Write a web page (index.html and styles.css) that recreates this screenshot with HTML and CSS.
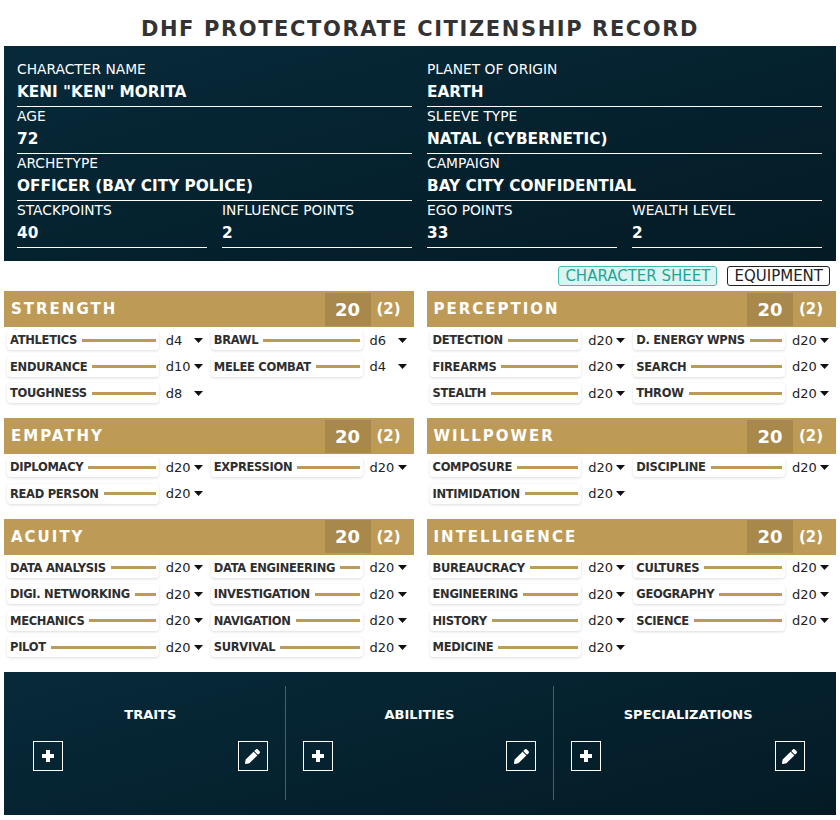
FILE: index.html
```html
<!DOCTYPE html>
<html lang="en">
<head>
<meta charset="utf-8">
<title>DHF Protectorate Citizenship Record</title>
<link rel="stylesheet" href="styles.css">
</head>
<body>
<div class="sheet">
  <h1 class="title">DHF PROTECTORATE CITIZENSHIP RECORD</h1>

  <section class="info">
    <div class="field wide"><div class="label">CHARACTER NAME</div><div class="value">KENI "KEN" MORITA</div></div>
    <div class="field wide"><div class="label">PLANET OF ORIGIN</div><div class="value">EARTH</div></div>
    <div class="field wide"><div class="label">AGE</div><div class="value">72</div></div>
    <div class="field wide"><div class="label">SLEEVE TYPE</div><div class="value">NATAL (CYBERNETIC)</div></div>
    <div class="field wide"><div class="label">ARCHETYPE</div><div class="value">OFFICER (BAY CITY POLICE)</div></div>
    <div class="field wide"><div class="label">CAMPAIGN</div><div class="value">BAY CITY CONFIDENTIAL</div></div>
    <div class="field"><div class="label">STACKPOINTS</div><div class="value">40</div></div>
    <div class="field"><div class="label">INFLUENCE POINTS</div><div class="value">2</div></div>
    <div class="field"><div class="label">EGO POINTS</div><div class="value">33</div></div>
    <div class="field"><div class="label">WEALTH LEVEL</div><div class="value">2</div></div>
  </section>

  <nav class="tabs">
    <span class="tab active">CHARACTER SHEET</span>
    <span class="tab">EQUIPMENT</span>
  </nav>

  <main class="attrs">
    <section class="attr">
      <header class="attr-head"><span class="attr-name">STRENGTH</span><span class="attr-score">20</span><span class="attr-mod">(2)</span></header>
      <div class="skills">
        <div class="skill"><div class="skill-card"><span class="skill-name">ATHLETICS</span><span class="skill-line"></span></div><div class="die"><span>d4</span><svg width="9" height="5" viewBox="0 0 9 5"><polygon points="0,0 9,0 4.5,5"/></svg></div></div>
        <div class="skill"><div class="skill-card"><span class="skill-name">BRAWL</span><span class="skill-line"></span></div><div class="die"><span>d6</span><svg width="9" height="5" viewBox="0 0 9 5"><polygon points="0,0 9,0 4.5,5"/></svg></div></div>
        <div class="skill"><div class="skill-card"><span class="skill-name">ENDURANCE</span><span class="skill-line"></span></div><div class="die"><span>d10</span><svg width="9" height="5" viewBox="0 0 9 5"><polygon points="0,0 9,0 4.5,5"/></svg></div></div>
        <div class="skill"><div class="skill-card"><span class="skill-name">MELEE COMBAT</span><span class="skill-line"></span></div><div class="die"><span>d4</span><svg width="9" height="5" viewBox="0 0 9 5"><polygon points="0,0 9,0 4.5,5"/></svg></div></div>
        <div class="skill"><div class="skill-card"><span class="skill-name">TOUGHNESS</span><span class="skill-line"></span></div><div class="die"><span>d8</span><svg width="9" height="5" viewBox="0 0 9 5"><polygon points="0,0 9,0 4.5,5"/></svg></div></div>
      </div>
    </section>

    <section class="attr">
      <header class="attr-head"><span class="attr-name">PERCEPTION</span><span class="attr-score">20</span><span class="attr-mod">(2)</span></header>
      <div class="skills">
        <div class="skill"><div class="skill-card"><span class="skill-name">DETECTION</span><span class="skill-line"></span></div><div class="die"><span>d20</span><svg width="9" height="5" viewBox="0 0 9 5"><polygon points="0,0 9,0 4.5,5"/></svg></div></div>
        <div class="skill"><div class="skill-card"><span class="skill-name">D. ENERGY WPNS</span><span class="skill-line"></span></div><div class="die"><span>d20</span><svg width="9" height="5" viewBox="0 0 9 5"><polygon points="0,0 9,0 4.5,5"/></svg></div></div>
        <div class="skill"><div class="skill-card"><span class="skill-name">FIREARMS</span><span class="skill-line"></span></div><div class="die"><span>d20</span><svg width="9" height="5" viewBox="0 0 9 5"><polygon points="0,0 9,0 4.5,5"/></svg></div></div>
        <div class="skill"><div class="skill-card"><span class="skill-name">SEARCH</span><span class="skill-line"></span></div><div class="die"><span>d20</span><svg width="9" height="5" viewBox="0 0 9 5"><polygon points="0,0 9,0 4.5,5"/></svg></div></div>
        <div class="skill"><div class="skill-card"><span class="skill-name">STEALTH</span><span class="skill-line"></span></div><div class="die"><span>d20</span><svg width="9" height="5" viewBox="0 0 9 5"><polygon points="0,0 9,0 4.5,5"/></svg></div></div>
        <div class="skill"><div class="skill-card"><span class="skill-name">THROW</span><span class="skill-line"></span></div><div class="die"><span>d20</span><svg width="9" height="5" viewBox="0 0 9 5"><polygon points="0,0 9,0 4.5,5"/></svg></div></div>
      </div>
    </section>

    <section class="attr">
      <header class="attr-head"><span class="attr-name">EMPATHY</span><span class="attr-score">20</span><span class="attr-mod">(2)</span></header>
      <div class="skills">
        <div class="skill"><div class="skill-card"><span class="skill-name">DIPLOMACY</span><span class="skill-line"></span></div><div class="die"><span>d20</span><svg width="9" height="5" viewBox="0 0 9 5"><polygon points="0,0 9,0 4.5,5"/></svg></div></div>
        <div class="skill"><div class="skill-card"><span class="skill-name">EXPRESSION</span><span class="skill-line"></span></div><div class="die"><span>d20</span><svg width="9" height="5" viewBox="0 0 9 5"><polygon points="0,0 9,0 4.5,5"/></svg></div></div>
        <div class="skill"><div class="skill-card"><span class="skill-name">READ PERSON</span><span class="skill-line"></span></div><div class="die"><span>d20</span><svg width="9" height="5" viewBox="0 0 9 5"><polygon points="0,0 9,0 4.5,5"/></svg></div></div>
      </div>
    </section>

    <section class="attr">
      <header class="attr-head"><span class="attr-name">WILLPOWER</span><span class="attr-score">20</span><span class="attr-mod">(2)</span></header>
      <div class="skills">
        <div class="skill"><div class="skill-card"><span class="skill-name">COMPOSURE</span><span class="skill-line"></span></div><div class="die"><span>d20</span><svg width="9" height="5" viewBox="0 0 9 5"><polygon points="0,0 9,0 4.5,5"/></svg></div></div>
        <div class="skill"><div class="skill-card"><span class="skill-name">DISCIPLINE</span><span class="skill-line"></span></div><div class="die"><span>d20</span><svg width="9" height="5" viewBox="0 0 9 5"><polygon points="0,0 9,0 4.5,5"/></svg></div></div>
        <div class="skill"><div class="skill-card"><span class="skill-name">INTIMIDATION</span><span class="skill-line"></span></div><div class="die"><span>d20</span><svg width="9" height="5" viewBox="0 0 9 5"><polygon points="0,0 9,0 4.5,5"/></svg></div></div>
      </div>
    </section>

    <section class="attr">
      <header class="attr-head"><span class="attr-name">ACUITY</span><span class="attr-score">20</span><span class="attr-mod">(2)</span></header>
      <div class="skills">
        <div class="skill"><div class="skill-card"><span class="skill-name">DATA ANALYSIS</span><span class="skill-line"></span></div><div class="die"><span>d20</span><svg width="9" height="5" viewBox="0 0 9 5"><polygon points="0,0 9,0 4.5,5"/></svg></div></div>
        <div class="skill"><div class="skill-card"><span class="skill-name">DATA ENGINEERING</span><span class="skill-line"></span></div><div class="die"><span>d20</span><svg width="9" height="5" viewBox="0 0 9 5"><polygon points="0,0 9,0 4.5,5"/></svg></div></div>
        <div class="skill"><div class="skill-card"><span class="skill-name">DIGI. NETWORKING</span><span class="skill-line"></span></div><div class="die"><span>d20</span><svg width="9" height="5" viewBox="0 0 9 5"><polygon points="0,0 9,0 4.5,5"/></svg></div></div>
        <div class="skill"><div class="skill-card"><span class="skill-name">INVESTIGATION</span><span class="skill-line"></span></div><div class="die"><span>d20</span><svg width="9" height="5" viewBox="0 0 9 5"><polygon points="0,0 9,0 4.5,5"/></svg></div></div>
        <div class="skill"><div class="skill-card"><span class="skill-name">MECHANICS</span><span class="skill-line"></span></div><div class="die"><span>d20</span><svg width="9" height="5" viewBox="0 0 9 5"><polygon points="0,0 9,0 4.5,5"/></svg></div></div>
        <div class="skill"><div class="skill-card"><span class="skill-name">NAVIGATION</span><span class="skill-line"></span></div><div class="die"><span>d20</span><svg width="9" height="5" viewBox="0 0 9 5"><polygon points="0,0 9,0 4.5,5"/></svg></div></div>
        <div class="skill"><div class="skill-card"><span class="skill-name">PILOT</span><span class="skill-line"></span></div><div class="die"><span>d20</span><svg width="9" height="5" viewBox="0 0 9 5"><polygon points="0,0 9,0 4.5,5"/></svg></div></div>
        <div class="skill"><div class="skill-card"><span class="skill-name">SURVIVAL</span><span class="skill-line"></span></div><div class="die"><span>d20</span><svg width="9" height="5" viewBox="0 0 9 5"><polygon points="0,0 9,0 4.5,5"/></svg></div></div>
      </div>
    </section>

    <section class="attr">
      <header class="attr-head"><span class="attr-name">INTELLIGENCE</span><span class="attr-score">20</span><span class="attr-mod">(2)</span></header>
      <div class="skills">
        <div class="skill"><div class="skill-card"><span class="skill-name">BUREAUCRACY</span><span class="skill-line"></span></div><div class="die"><span>d20</span><svg width="9" height="5" viewBox="0 0 9 5"><polygon points="0,0 9,0 4.5,5"/></svg></div></div>
        <div class="skill"><div class="skill-card"><span class="skill-name">CULTURES</span><span class="skill-line"></span></div><div class="die"><span>d20</span><svg width="9" height="5" viewBox="0 0 9 5"><polygon points="0,0 9,0 4.5,5"/></svg></div></div>
        <div class="skill"><div class="skill-card"><span class="skill-name">ENGINEERING</span><span class="skill-line"></span></div><div class="die"><span>d20</span><svg width="9" height="5" viewBox="0 0 9 5"><polygon points="0,0 9,0 4.5,5"/></svg></div></div>
        <div class="skill"><div class="skill-card"><span class="skill-name">GEOGRAPHY</span><span class="skill-line"></span></div><div class="die"><span>d20</span><svg width="9" height="5" viewBox="0 0 9 5"><polygon points="0,0 9,0 4.5,5"/></svg></div></div>
        <div class="skill"><div class="skill-card"><span class="skill-name">HISTORY</span><span class="skill-line"></span></div><div class="die"><span>d20</span><svg width="9" height="5" viewBox="0 0 9 5"><polygon points="0,0 9,0 4.5,5"/></svg></div></div>
        <div class="skill"><div class="skill-card"><span class="skill-name">SCIENCE</span><span class="skill-line"></span></div><div class="die"><span>d20</span><svg width="9" height="5" viewBox="0 0 9 5"><polygon points="0,0 9,0 4.5,5"/></svg></div></div>
        <div class="skill"><div class="skill-card"><span class="skill-name">MEDICINE</span><span class="skill-line"></span></div><div class="die"><span>d20</span><svg width="9" height="5" viewBox="0 0 9 5"><polygon points="0,0 9,0 4.5,5"/></svg></div></div>
      </div>
    </section>
  </main>

  <section class="extras">
    <div class="extra">
      <h2 class="extra-title">TRAITS</h2>
      <div class="extra-actions">
        <button class="icon-btn" type="button" aria-label="Add trait"><svg width="12" height="12" viewBox="0 0 12 12"><rect x="4" y="0" width="4" height="12"/><rect x="0" y="4" width="12" height="4"/></svg></button>
        <button class="icon-btn" type="button" aria-label="Edit traits"><svg width="15" height="15" viewBox="0 0 512 512"><path d="M497.9 142.1l-46.1 46.1c-4.7 4.7-12.3 4.7-17 0l-111-111c-4.7-4.7-4.7-12.3 0-17l46.1-46.1c18.7-18.7 49.1-18.7 67.9 0l60.1 60.1c18.8 18.7 18.8 49.1 0 67.9zM284.2 99.8L21.6 362.4.4 483.9c-2.9 16.4 11.4 30.6 27.8 27.8l121.5-21.3 262.6-262.6c4.7-4.7 4.7-12.3 0-17l-111-111c-4.8-4.7-12.4-4.7-17.1 0z"/></svg></button>
      </div>
    </div>
    <div class="extra">
      <h2 class="extra-title">ABILITIES</h2>
      <div class="extra-actions">
        <button class="icon-btn" type="button" aria-label="Add ability"><svg width="12" height="12" viewBox="0 0 12 12"><rect x="4" y="0" width="4" height="12"/><rect x="0" y="4" width="12" height="4"/></svg></button>
        <button class="icon-btn" type="button" aria-label="Edit abilities"><svg width="15" height="15" viewBox="0 0 512 512"><path d="M497.9 142.1l-46.1 46.1c-4.7 4.7-12.3 4.7-17 0l-111-111c-4.7-4.7-4.7-12.3 0-17l46.1-46.1c18.7-18.7 49.1-18.7 67.9 0l60.1 60.1c18.8 18.7 18.8 49.1 0 67.9zM284.2 99.8L21.6 362.4.4 483.9c-2.9 16.4 11.4 30.6 27.8 27.8l121.5-21.3 262.6-262.6c4.7-4.7 4.7-12.3 0-17l-111-111c-4.8-4.7-12.4-4.7-17.1 0z"/></svg></button>
      </div>
    </div>
    <div class="extra">
      <h2 class="extra-title">SPECIALIZATIONS</h2>
      <div class="extra-actions">
        <button class="icon-btn" type="button" aria-label="Add specialization"><svg width="12" height="12" viewBox="0 0 12 12"><rect x="4" y="0" width="4" height="12"/><rect x="0" y="4" width="12" height="4"/></svg></button>
        <button class="icon-btn" type="button" aria-label="Edit specializations"><svg width="15" height="15" viewBox="0 0 512 512"><path d="M497.9 142.1l-46.1 46.1c-4.7 4.7-12.3 4.7-17 0l-111-111c-4.7-4.7-4.7-12.3 0-17l46.1-46.1c18.7-18.7 49.1-18.7 67.9 0l60.1 60.1c18.8 18.7 18.8 49.1 0 67.9zM284.2 99.8L21.6 362.4.4 483.9c-2.9 16.4 11.4 30.6 27.8 27.8l121.5-21.3 262.6-262.6c4.7-4.7 4.7-12.3 0-17l-111-111c-4.8-4.7-12.4-4.7-17.1 0z"/></svg></button>
      </div>
    </div>
  </section>
</div>
</body>
</html>
```

FILE: styles.css
```css
* { box-sizing: border-box; }

body {
  margin: 0;
  background: #fff;
  font-family: "DejaVu Sans", "Liberation Sans", sans-serif;
  color: #2e2e2e;
}

.sheet { padding: 0 4px; }

.title {
  margin: 0;
  padding: 17px 0 5px;
  text-align: center;
  font-size: 21px;
  line-height: 24px;
  font-weight: bold;
  letter-spacing: 1.6px;
  color: #333;
}

/* ---------- identity panel ---------- */
.info {
  display: grid;
  grid-template-columns: repeat(4, 1fr);
  column-gap: 15px;
  padding: 15px 14px 12px 13px;
  background: linear-gradient(165deg, #072a3a 0%, #05212e 55%, #041b25 100%);
  color: #fff;
}
.field {
  padding-bottom: 4px;
  border-bottom: 1px solid #fff;
  margin-bottom: 1px;
  min-width: 0;
}
.field.wide { grid-column: span 2; }
.label {
  font-size: 13.8px;
  line-height: 16px;
  white-space: nowrap;
}
.value {
  margin-top: 5px;
  font-size: 15.3px;
  line-height: 20px;
  font-weight: bold;
  white-space: nowrap;
}

/* ---------- tabs ---------- */
.tabs {
  display: flex;
  justify-content: flex-end;
  gap: 10px;
  padding: 5px 6px 5px 0;
}
.tab {
  display: block;
  height: 20px;
  padding: 0 6px;
  font-size: 15px;
  line-height: 18px;
  border: 1px solid #222;
  border-radius: 3px;
  background: #fff;
  color: #222;
  white-space: nowrap;
}
.tab.active {
  border-color: #45bfb1;
  background: #dcf4f1;
  color: #23a596;
}

/* ---------- attributes ---------- */
.attrs {
  display: grid;
  grid-template-columns: 1fr 1fr;
  column-gap: 13px;
}
.attr { padding-bottom: 15px; }
.attr-head {
  display: flex;
  align-items: center;
  height: 36px;
  background: #bd9b56;
  color: #fff;
}
.attr-name {
  flex: 1;
  padding-left: 7px;
  font-size: 15px;
  font-weight: bold;
  letter-spacing: 2px;
}
.attr-score {
  display: flex;
  align-items: center;
  justify-content: center;
  width: 46px;
  height: 33px;
  background: #a8884b;
  font-size: 18px;
  font-weight: bold;
}
.attr-mod {
  width: 43px;
  padding-left: 6px;
  font-size: 15px;
  font-weight: bold;
}

.skills {
  display: grid;
  grid-template-columns: 1fr 1fr;
  column-gap: 4px;
  row-gap: 6.5px;
  padding: 3px 3px 0;
}
.skill {
  display: flex;
  align-items: center;
  height: 20px;
  min-width: 0;
}
.skill-card {
  flex: 1;
  display: flex;
  align-items: center;
  height: 20px;
  min-width: 0;
  padding: 0 3px;
  background: #fff;
  border-radius: 4px;
  box-shadow: 0 1px 3px rgba(0, 0, 0, 0.14);
}
.skill-name {
  font-size: 11.5px;
  letter-spacing: -0.3px;
  font-weight: bold;
  white-space: nowrap;
  color: #2e2e2e;
}
.skill-line {
  flex: 1;
  height: 3px;
  margin-left: 5px;
  background: #bd9b56;
}
.die {
  display: flex;
  align-items: center;
  width: 48px;
  padding: 0 4px 0 7px;
  font-size: 13px;
  color: #222;
}
.die svg {
  margin-left: auto;
  fill: #111;
}

/* ---------- traits / abilities / specializations ---------- */
.extras {
  display: grid;
  grid-template-columns: repeat(3, 1fr);
  padding: 14px 14px 15px 12px;
  background: linear-gradient(165deg, #072a3a 0%, #05212e 55%, #041b25 100%);
}
.extra {
  padding: 20px 17px 29px;
}
.extra + .extra { border-left: 1px solid #4b5e67; }
.extra-title {
  margin: 0;
  text-align: center;
  font-size: 13px;
  line-height: 18px;
  font-weight: bold;
  color: #fff;
}
.extra-actions {
  display: flex;
  justify-content: space-between;
  margin-top: 17px;
}
.icon-btn {
  display: flex;
  align-items: center;
  justify-content: center;
  width: 30px;
  height: 30px;
  padding: 0;
  border: 1px solid #fff;
  background: transparent;
}
.icon-btn svg { fill: #fff; }
```
